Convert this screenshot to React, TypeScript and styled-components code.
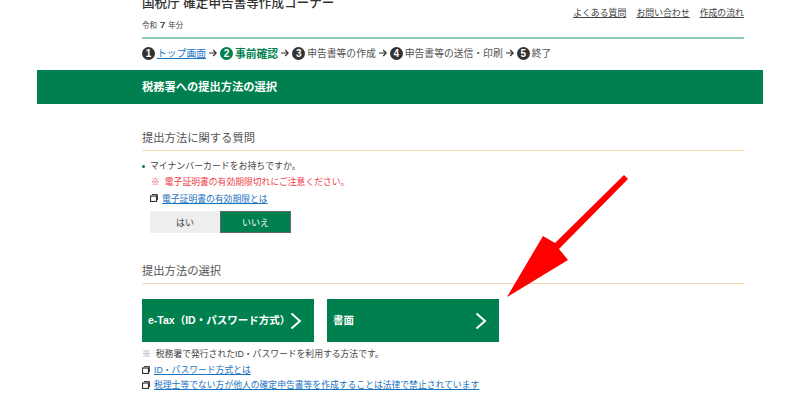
import styled, { createGlobalStyle } from 'styled-components';

const GlobalStyle = createGlobalStyle`
    html, body {
        margin: 0;
        padding: 0;
        background: #fff;
    }
    body {
        font-family: "Liberation Sans", "Noto Sans CJK JP", sans-serif;
        color: #333;
        overflow: hidden;
    }
`;

const Page = styled.div`
    position: relative;
    width: 800px;
    height: 400px;
    overflow: hidden;
`;

const Column = styled.div`
    width: 602px;
    margin-left: 142px;
`;

const Header = styled(Column)`
    display: flex;
    justify-content: space-between;
    height: 44px;
    margin-top: -7px;
    border-bottom: 2px solid #8ccdb8;
`;

const Title = styled.div`
    font-size: 12.6px;
    line-height: 20px;
    font-weight: 500;
    color: #333;
`;

const Year = styled.div`
    font-size: 7.5px;
    line-height: 12px;
    margin-top: 6px;
    color: #444;
    b {
        font-size: 9.5px;
        margin: 0 3px;
    }
`;

const HeaderLinks = styled.div`
    display: flex;
    gap: 10px;
    margin-top: 13px;
    a {
        font-size: 8.9px;
        line-height: 14px;
        color: #444;
        text-decoration: underline;
    }
`;

const Steps = styled(Column)`
    display: flex;
    align-items: center;
    height: 28px;
    padding-bottom: 3px;
    font-size: 9.8px;
    color: #555;
    white-space: nowrap;
`;

const StepNum = styled.span<{ active?: boolean }>`
    display: inline-flex;
    align-items: center;
    justify-content: center;
    width: 13px;
    height: 13px;
    margin-right: 2px;
    border-radius: 50%;
    background: ${({ active }) => (active ? '#00804f' : '#333')};
    color: #fff;
    font-size: 10px;
    font-weight: 700;
`;

const StepLink = styled.a`
    color: #1a73c0;
    text-decoration: underline;
`;

const StepCurrent = styled.b`
    font-size: 10.8px;
    color: #00804f;
`;

const StepArrowIcon = styled.svg`
    flex: none;
    margin: 0 3px;
`;

const StepArrow = () => (
    <StepArrowIcon width="8" height="8" viewBox="0 0 8 8">
        <path d="M0 4H7M4.2 1L7.2 4L4.2 7" fill="none" stroke="#333" strokeWidth="1.2" />
    </StepArrowIcon>
);

const Banner = styled.div`
    display: flex;
    align-items: center;
    width: 726px;
    height: 34px;
    margin-left: 37px;
    padding: 0 0 2px 105px;
    box-sizing: border-box;
    background: #00804f;
    color: #fff;
    font-size: 11.25px;
    font-weight: 700;
`;

const SectionHead = styled(Column)<{ top: number }>`
    margin-top: ${({ top }) => top}px;
    height: 18px;
    padding-top: 2px;
    border-bottom: 1px solid #fad8b0;
    font-size: 11.3px;
    line-height: 13px;
    color: #555;
`;

const Question = styled(Column)`
    margin-top: 8px;
    font-size: 8.9px;
    line-height: 15px;
    color: #444;
    display: flex;
    align-items: center;
    &::before {
        content: '';
        width: 3px;
        height: 3px;
        margin-right: 5px;
        border-radius: 50%;
        background: #00804f;
    }
`;

const Note = styled(Column)<{ red?: boolean; indent?: number; top?: number }>`
    padding-left: ${({ indent }) => indent ?? 0}px;
    margin-top: ${({ top }) => top ?? 0}px;
    box-sizing: border-box;
    font-size: 8.8px;
    line-height: 16px;
    color: ${({ red }) => (red ? '#f03c46' : '#444')};
    span {
        margin-right: 5px;
        color: ${({ red }) => (red ? '#f03c46' : '#888')};
    }
`;

const LinkRow = styled(Column)<{ height?: number; left?: number }>`
    display: flex;
    align-items: center;
    gap: 4px;
    height: ${({ height }) => height ?? 16}px;
    padding-left: ${({ left }) => left ?? 0}px;
    box-sizing: border-box;
    font-size: 8.8px;
    a {
        color: #1a73c0;
        text-decoration: underline;
    }
`;

const WindowIcon = () => (
    <svg width="8" height="8" viewBox="0 0 8 8">
        <path d="M2 0.5h5.5v5.5" fill="none" stroke="#444" strokeWidth="1" />
        <rect x="0.5" y="2" width="6" height="5.5" fill="#fff" stroke="#333" strokeWidth="1.2" />
    </svg>
);

const Toggle = styled(Column)`
    display: flex;
    margin-top: 5px;
    padding-left: 8px;
    box-sizing: border-box;
`;

const ToggleButton = styled.div<{ selected?: boolean }>`
    display: flex;
    align-items: center;
    justify-content: center;
    width: ${({ selected }) => (selected ? 71 : 70)}px;
    height: 22px;
    box-sizing: border-box;
    background: ${({ selected }) => (selected ? '#00804f' : '#eee')};
    border: ${({ selected }) => (selected ? '1px solid #666' : 'none')};
    color: ${({ selected }) => (selected ? '#fff' : '#444')};
    font-size: 9px;
`;

const Choices = styled(Column)`
    display: flex;
    gap: 13px;
    margin-top: 15px;
`;

const Choice = styled.div`
    display: flex;
    align-items: center;
    justify-content: space-between;
    width: 172px;
    height: 43px;
    padding: 0 12px 0 6px;
    box-sizing: border-box;
    background: #00804f;
    color: #fff;
    font-size: 10.5px;
    font-weight: 700;
    white-space: nowrap;
`;

const ChoiceLabel = styled.span`
    margin-bottom: 3px;
`;

const Chevron = () => (
    <svg width="12" height="18" viewBox="0 0 12 18">
        <path d="M1.5 1.5L10 9L1.5 16.5" fill="none" stroke="#fff" strokeWidth="2" />
    </svg>
);

const ArrowOverlay = styled.svg`
    position: absolute;
    left: 0;
    top: 0;
    width: 800px;
    height: 400px;
    pointer-events: none;
`;

const App = () => {
    return (
        <Page>
            <GlobalStyle />
            <Header>
                <div>
                    <Title>国税庁 確定申告書等作成コーナー</Title>
                    <Year>
                        令和<b>7</b>年分
                    </Year>
                </div>
                <HeaderLinks>
                    <a>よくある質問</a>
                    <a>お問い合わせ</a>
                    <a>作成の流れ</a>
                </HeaderLinks>
            </Header>
            <Steps>
                <StepNum>1</StepNum>
                <StepLink>トップ画面</StepLink>
                <StepArrow />
                <StepNum active>2</StepNum>
                <StepCurrent>事前確認</StepCurrent>
                <StepArrow />
                <StepNum>3</StepNum>申告書等の作成
                <StepArrow />
                <StepNum>4</StepNum>申告書等の送信・印刷
                <StepArrow />
                <StepNum>5</StepNum>終了
            </Steps>
            <Banner>税務署への提出方法の選択</Banner>
            <SectionHead top={26}>提出方法に関する質問</SectionHead>
            <Question>マイナンバーカードをお持ちですか。</Question>
            <Note red indent={9}>
                <span>※</span>電子証明書の有効期限切れにご注意ください。
            </Note>
            <LinkRow left={8}>
                <WindowIcon />
                <a>電子証明書の有効期限とは</a>
            </LinkRow>
            <Toggle>
                <ToggleButton>はい</ToggleButton>
                <ToggleButton selected>いいえ</ToggleButton>
            </Toggle>
            <SectionHead top={30}>提出方法の選択</SectionHead>
            <Choices>
                <Choice>
                    <ChoiceLabel>e-Tax（ID・パスワード方式）</ChoiceLabel>
                    <Chevron />
                </Choice>
                <Choice>
                    <ChoiceLabel>書面</ChoiceLabel>
                    <Chevron />
                </Choice>
            </Choices>
            <Note top={4}>
                <span>※</span>税務署で発行されたID・パスワードを利用する方法です。
            </Note>
            <LinkRow height={15}>
                <WindowIcon />
                <a>ID・パスワード方式とは</a>
            </LinkRow>
            <LinkRow height={15}>
                <WindowIcon />
                <a>税理士等でない方が他人の確定申告書等を作成することは法律で禁止されています</a>
            </LinkRow>
            <ArrowOverlay viewBox="0 0 800 400">
                <polygon
                    points="507,297 543,236 555,243 624,175 628,179 559,249 568,260"
                    fill="#ff0000"
                />
            </ArrowOverlay>
        </Page>
    );
};

export default App;
